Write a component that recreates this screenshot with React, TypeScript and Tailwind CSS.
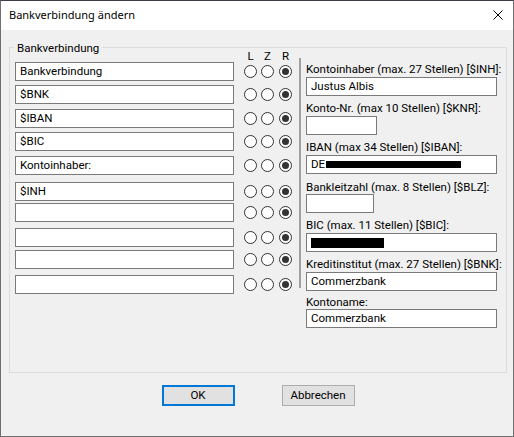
const font = "font-['Roboto',sans-serif]";

interface LineRow {
  text: string;
  gap: string;
}

// left column: text lines, each with an L / Z / R alignment choice
const lines: LineRow[] = [
  { text: 'Bankverbindung', gap: 'mt-0' },
  { text: '$BNK', gap: 'mt-[4px]' },
  { text: '$IBAN', gap: 'mt-[5px]' },
  { text: '$BIC', gap: 'mt-[4px]' },
  { text: 'Kontoinhaber:', gap: 'mt-[5px]' },
  { text: '$INH', gap: 'mt-[7px]' },
  { text: '', gap: 'mt-[2px]' },
  { text: '', gap: 'mt-[6px]' },
  { text: '', gap: 'mt-[3px]' },
  { text: '', gap: 'mt-[6px]' },
];

function Radio({ checked }: { checked?: boolean }): JSX.Element {
  return (
    <span className="w-[13px] h-[13px] rounded-full border border-[#333] bg-white flex items-center justify-center shrink-0">
      {checked && <span className="w-[7px] h-[7px] rounded-full bg-[#333]" />}
    </span>
  );
}

function TextBox({ value, width, children }: { value?: string; width: string; children?: React.ReactNode }): JSX.Element {
  return (
    <div className={`${width} h-[19px] border border-[#7a7a7a] bg-white pl-[4px] flex items-center text-[11.5px] leading-[17px] text-black whitespace-nowrap overflow-hidden`}>
      {value}
      {children}
    </div>
  );
}

function Label({ text, gap }: { text: string; gap: string }): JSX.Element {
  return <div className={`${gap} h-[14px] leading-[14px] text-[11.5px] text-black whitespace-nowrap`}>{text}</div>;
}

export default function App(): JSX.Element {
  return (
    <div className={`${font} w-[514px] h-[437px] bg-[#f0f0f0] border border-[#707070] border-t-[#3c3c4a] flex flex-col`}>
      {/* title bar */}
      <div className="h-[29px] bg-white flex items-center justify-between pl-[8px] pr-[10px] shrink-0">
        <span className="font-['Noto_Sans',sans-serif] text-[11px] text-black">Bankverbindung ändern</span>
        <svg width="10" height="10" viewBox="0 0 10 10" className="mb-[1px]">
          <path d="M0.5 0.5 L9.5 9.5 M9.5 0.5 L0.5 9.5" stroke="#000" strokeWidth="1" />
        </svg>
      </div>

      {/* group box */}
      <div className="relative ml-[8px] mt-[17px] w-[498px] h-[326px] border border-[#dcdcdc] flex pl-[5px]">
        <span className="absolute left-[4px] top-[-8px] px-[3px] bg-[#f0f0f0] text-[11.5px] leading-[16px] text-black">
          Bankverbindung
        </span>

        <div className="flex flex-col">
          <div className="h-[14px] flex text-[11.5px] leading-[14px] pt-[1px] text-black">
            <span className="w-[229px]" />
            <span className="w-[13px] text-center">L</span>
            <span className="w-[13px] ml-[4px] text-center">Z</span>
            <span className="w-[13px] ml-[5px] text-center">R</span>
          </div>
          {lines.map((l, i) => (
            <div key={i} className={`${l.gap} flex items-center`}>
              <TextBox value={l.text} width="w-[219px]" />
              <div className="flex items-center ml-[10px]">
                <Radio />
                <span className="ml-[4px]"><Radio /></span>
                <span className="ml-[5px]"><Radio checked /></span>
              </div>
            </div>
          ))}
        </div>

        <div className="ml-[7px] mt-[10px] w-[2px] h-[230px] bg-[#a0a0a0]" />

        <div className="ml-[5px] flex flex-col w-[191px]">
          <Label text="Kontoinhaber (max. 27 Stellen) [$INH]:" gap="mt-[14px]" />
          <div className="mt-[1px]"><TextBox value="Justus Albis" width="w-[191px]" /></div>

          <Label text="Konto-Nr. (max 10 Stellen) [$KNR]:" gap="mt-[5px]" />
          <div className="mt-[1px]"><TextBox width="w-[71px]" /></div>

          <Label text="IBAN (max 34 Stellen) [$IBAN]:" gap="mt-[5px]" />
          <div className="mt-[1px]">
            <TextBox value="DE" width="w-[191px]">
              <span className="ml-[1px] w-[135px] h-[7px] bg-black" />
            </TextBox>
          </div>

          <Label text="Bankleitzahl (max. 8 Stellen) [$BLZ]:" gap="mt-[6px]" />
          <TextBox width="w-[68px]" />

          <Label text="BIC (max. 11 Stellen) [$BIC]:" gap="mt-[5px]" />
          <div className="mt-[1px]">
            <TextBox width="w-[191px]">
              <span className="w-[73px] h-[10px] bg-black" />
            </TextBox>
          </div>

          <Label text="Kreditinstitut (max. 27 Stellen) [$BNK]:" gap="mt-[5px]" />
          <div className="mt-[1px]"><TextBox value="Commerzbank" width="w-[191px]" /></div>

          <Label text="Kontoname:" gap="mt-[4px]" />
          <TextBox value="Commerzbank" width="w-[191px]" />
        </div>
      </div>

      {/* dialog buttons */}
      <div className="mt-[12px] flex justify-center gap-[47px] pl-[2px]">
        <button className="w-[73px] h-[21px] border-2 border-[#0078d7] bg-[#e1e1e1] text-[11.5px] text-black leading-[17px]">
          OK
        </button>
        <button className="w-[73px] h-[21px] border border-[#adadad] bg-[#e1e1e1] text-[11.5px] text-black leading-[19px]">
          Abbrechen
        </button>
      </div>
    </div>
  );
}
